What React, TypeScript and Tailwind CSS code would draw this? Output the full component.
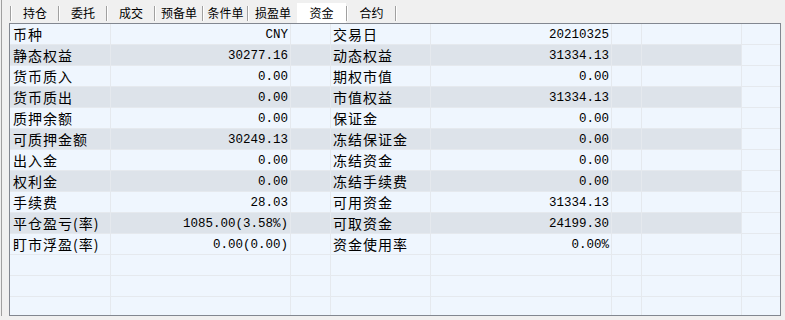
const tabs = [
  { name: "持仓", w: "w-[48px]" },
  { name: "委托", w: "w-[48px]" },
  { name: "成交", w: "w-[48px]" },
  { name: "预备单", w: "w-[48px]" },
  { name: "条件单", w: "w-[45px]" },
  { name: "损盈单", w: "w-[50px]" },
  { name: "资金", w: "w-[49px]", active: true },
  { name: "合约", w: "w-[49px]" },
];

const rows: [string, string, string, string][] = [
  ["币种", "CNY", "交易日", "20210325"],
  ["静态权益", "30277.16", "动态权益", "31334.13"],
  ["货币质入", "0.00", "期权市值", "0.00"],
  ["货币质出", "0.00", "市值权益", "31334.13"],
  ["质押余额", "0.00", "保证金", "0.00"],
  ["可质押金额", "30249.13", "冻结保证金", "0.00"],
  ["出入金", "0.00", "冻结资金", "0.00"],
  ["权利金", "0.00", "冻结手续费", "0.00"],
  ["手续费", "28.03", "可用资金", "31334.13"],
  ["平仓盈亏(率)", "1085.00(3.58%)", "可取资金", "24199.30"],
  ["盯市浮盈(率)", "0.00(0.00)", "资金使用率", "0.00%"],
  ["", "", "", ""],
  ["", "", "", ""],
  ["", "", "", ""],
];

const label =
  "font-['Noto_Sans_CJK_SC',sans-serif] text-[14px] tracking-[1px] leading-[18px] text-black";
const num =
  "font-['Liberation_Mono',monospace] text-[12.5px] leading-[18px] text-black text-right";

function Row({ cells, shaded }: { cells: [string, string, string, string]; shaded: boolean }) {
  const bg = shaded ? "bg-[#dde3ea]" : "bg-[#eff6fe]";
  const cell = "h-[21px] border-r border-b border-[#e5e9ee] overflow-hidden whitespace-nowrap";
  return (
    <div className="flex">
      <div className={`${cell} ${bg} w-[101px] pl-[3px] pt-[1px] ${label}`}>{cells[0]}</div>
      <div className={`${cell} ${bg} w-[180px] pr-[2px] pt-[2px] ${num}`}>{cells[1]}</div>
      <div className={`${cell} ${bg} w-[40px]`} />
      <div className={`${cell} ${bg} w-[100px] pl-[2px] pt-[1px] ${label}`}>{cells[2]}</div>
      <div className={`${cell} ${bg} w-[181px] pr-[2px] pt-[2px] ${num}`}>{cells[3]}</div>
      <div className={`${cell} ${bg} w-[30px]`} />
      <div className={`${cell} ${bg} w-[100px]`} />
      <div className={`${cell} bg-[#eff6fe] w-[38px] border-r-0`} />
    </div>
  );
}

export default function App() {
  return (
    <div className="w-[785px] h-[320px] bg-[#f0f0f0] overflow-hidden">
      <div className="ml-px h-[316px] border-l border-[#a0a0a0] pl-[7px]">
        {/* Tab strip */}
        <div className="flex h-[23px] items-end pl-px">
          {tabs.map((t) =>
            t.active ? (
              <div
                key={t.name}
                className={`${t.w} h-[20px] bg-white flex items-center justify-center font-['Noto_Sans_CJK_SC',sans-serif] text-[12px] text-black`}
              >
                {t.name}
              </div>
            ) : (
              <div
                key={t.name}
                className={`${t.w} h-[20px] flex items-center pb-px`}
              >
                <div className="h-[15px] w-px bg-[#a0a0a0] self-end mb-[1px]" />
                <div className="h-[15px] w-px bg-white self-end mb-[1px]" />
                <div className="flex-1 text-center font-['Noto_Sans_CJK_SC',sans-serif] text-[12px] text-black">
                  {t.name}
                </div>
              </div>
            )
          )}
          <div className="h-[20px] flex items-center pb-px">
            <div className="h-[15px] w-px bg-[#a0a0a0] self-end mb-[1px]" />
            <div className="h-[15px] w-px bg-white self-end mb-[1px]" />
          </div>
        </div>

        {/* Fund table */}
        <div className="w-[772px] h-[293px] border border-[#828790] bg-[#eff6fe] overflow-hidden">
          {rows.map((r, i) => (
            <Row key={i} cells={r} shaded={i % 2 === 1 && i < 11} />
          ))}
        </div>
      </div>
    </div>
  );
}
